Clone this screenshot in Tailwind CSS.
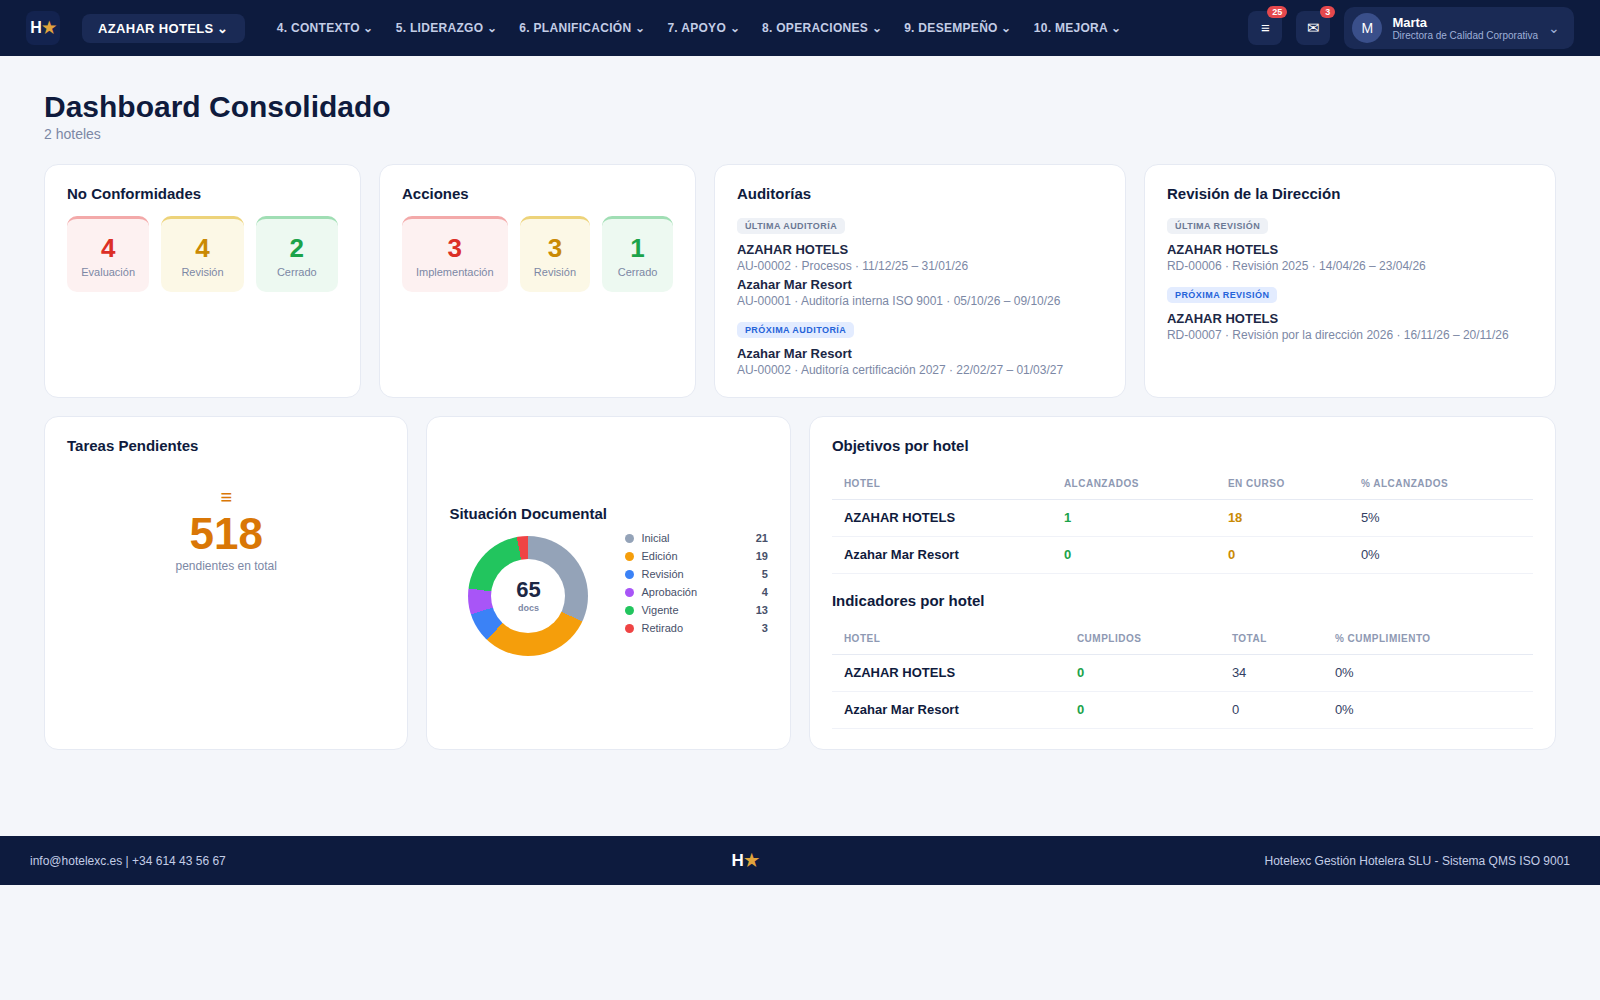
<!DOCTYPE html>
<html lang="es">
<head>
  <meta charset="UTF-8">
  <meta name="viewport" content="width=device-width, initial-scale=1.0">
  <title>Dashboard Consolidado</title>
  <script src="https://cdn.jsdelivr.net/npm/@tailwindcss/browser@4"></script>
</head>
<body class="min-h-screen bg-[#f4f6fa] font-['Liberation_Sans',Arial,sans-serif] text-[#0f1b3d]">
  <!-- Navbar -->
  <header class="flex h-14 items-center bg-[#0d1b3e] px-[26px]">
    <a href="#" aria-label="Inicio" class="flex size-[34px] shrink-0 items-center justify-center rounded-lg bg-[#13234f] text-base leading-[18px] font-bold text-white">H<span class="text-[#e0a43c]">★</span></a>
    <button type="button" class="ml-[22px] shrink-0 rounded-lg bg-[#1a2a55] px-4 py-[7px] text-[13px] leading-[15px] font-bold tracking-wide whitespace-nowrap text-white">AZAHAR HOTELS ⌄</button>
    <nav class="ml-8 flex gap-[22px] text-xs leading-[14px] font-bold tracking-wide whitespace-nowrap text-[#c3cde6]">
      <button type="button">4. CONTEXTO ⌄</button>
      <button type="button">5. LIDERAZGO ⌄</button>
      <button type="button">6. PLANIFICACIÓN ⌄</button>
      <button type="button">7. APOYO ⌄</button>
      <button type="button">8. OPERACIONES ⌄</button>
      <button type="button">9. DESEMPEÑO ⌄</button>
      <button type="button">10. MEJORA ⌄</button>
    </nav>
    <div class="ml-auto flex shrink-0 items-center gap-[14px]">
      <button type="button" aria-label="Tareas" class="relative size-[34px] rounded-lg bg-[#1a2a55] text-[15px] text-white">≡<span class="absolute -top-[5px] -right-[5px] rounded-full bg-[#e5484d] px-[5px] py-px text-[9px] leading-[10px] font-bold">25</span></button>
      <button type="button" aria-label="Mensajes" class="relative size-[34px] rounded-lg bg-[#1a2a55] text-[15px] text-white">✉<span class="absolute -top-[5px] -right-[5px] rounded-full bg-[#e5484d] px-[5px] py-px text-[9px] leading-[10px] font-bold">3</span></button>
      <button type="button" class="flex h-[42px] items-center gap-[10px] rounded-[10px] bg-[#1a2a55] pr-[14px] pl-2 text-left">
        <span class="flex size-[30px] items-center justify-center rounded-full bg-[#3a4f8a] text-sm text-white">M</span>
        <span>
          <span class="block text-[13px] leading-[15px] font-bold text-white">Marta</span>
          <span class="block text-[10px] leading-[11px] text-[#9fb0d8]">Directora de Calidad Corporativa</span>
        </span>
        <span class="text-sm text-[#9fb0d8]">⌄</span>
      </button>
    </div>
  </header>

  <main class="px-11 pt-[34px] pb-[86px]">
    <h1 class="text-3xl leading-[34px] font-bold">Dashboard Consolidado</h1>
    <p class="mt-0.5 text-sm leading-4 text-[#7c88a5]">2 hoteles</p>

    <!-- Fila superior -->
    <div class="mt-[22px] grid grid-cols-[1fr_1fr_1.3fr_1.3fr] gap-[18px]">
      <section class="rounded-[14px] border border-[#e6eaf3] bg-white px-[22px] pt-5 pb-[19px]">
        <h2 class="mb-[14px] text-[15px] leading-[17px] font-bold">No Conformidades</h2>
        <div class="flex gap-3 text-center text-[11px] leading-[13px] text-[#7c88a5]">
          <div class="flex-1 rounded-[10px] border-t-[3px] border-[#f3a9a9] bg-[#fdf1f1] px-[14px] pt-[15px] pb-[13px]"><div class="mb-[3px] text-[26px] leading-[29px] font-bold text-[#dc2f26]">4</div>Evaluación</div>
          <div class="flex-1 rounded-[10px] border-t-[3px] border-[#edd37a] bg-[#fcf8e6] px-[14px] pt-[15px] pb-[13px]"><div class="mb-[3px] text-[26px] leading-[29px] font-bold text-[#ca8a04]">4</div>Revisión</div>
          <div class="flex-1 rounded-[10px] border-t-[3px] border-[#a0deb4] bg-[#edf9f1] px-[14px] pt-[15px] pb-[13px]"><div class="mb-[3px] text-[26px] leading-[29px] font-bold text-[#1ba34a]">2</div>Cerrado</div>
        </div>
      </section>

      <section class="rounded-[14px] border border-[#e6eaf3] bg-white px-[22px] pt-5 pb-[19px]">
        <h2 class="mb-[14px] text-[15px] leading-[17px] font-bold">Acciones</h2>
        <div class="flex gap-3 text-center text-[11px] leading-[13px] text-[#7c88a5]">
          <div class="flex-1 rounded-[10px] border-t-[3px] border-[#f3a9a9] bg-[#fdf1f1] px-[14px] pt-[15px] pb-[13px]"><div class="mb-[3px] text-[26px] leading-[29px] font-bold text-[#dc2f26]">3</div>Implementación</div>
          <div class="flex-1 rounded-[10px] border-t-[3px] border-[#edd37a] bg-[#fcf8e6] px-[14px] pt-[15px] pb-[13px]"><div class="mb-[3px] text-[26px] leading-[29px] font-bold text-[#ca8a04]">3</div>Revisión</div>
          <div class="flex-1 rounded-[10px] border-t-[3px] border-[#a0deb4] bg-[#edf9f1] px-[14px] pt-[15px] pb-[13px]"><div class="mb-[3px] text-[26px] leading-[29px] font-bold text-[#1ba34a]">1</div>Cerrado</div>
        </div>
      </section>

      <section class="rounded-[14px] border border-[#e6eaf3] bg-white px-[22px] pt-5 pb-[19px]">
        <h2 class="mb-4 text-[15px] leading-[17px] font-bold">Auditorías</h2>
        <div class="flex flex-col items-start gap-[3px]">
          <span class="mb-[5px] rounded-[5px] bg-[#eef1f6] px-2 py-[3px] text-[9px] leading-[10px] font-bold tracking-wider text-[#6b7894]">ÚLTIMA AUDITORÍA</span>
          <div class="leading-4">
            <p class="text-[13px] leading-4 font-bold text-[#1c2745]">AZAHAR HOTELS</p>
            <p class="text-xs leading-4 text-[#7c88a5]">AU-00002 · Procesos · 11/12/25 – 31/01/26</p>
          </div>
          <div>
            <p class="text-[13px] leading-4 font-bold text-[#1c2745]">Azahar Mar Resort</p>
            <p class="text-xs leading-4 text-[#7c88a5]">AU-00001 · Auditoría interna ISO 9001 · 05/10/26 – 09/10/26</p>
          </div>
        </div>
        <div class="mt-[13px] flex flex-col items-start gap-[3px]">
          <span class="mb-[5px] rounded-[5px] bg-[#e3ecff] px-2 py-[3px] text-[9px] leading-[10px] font-bold tracking-wider text-[#2563d9]">PRÓXIMA AUDITORÍA</span>
          <div>
            <p class="text-[13px] leading-4 font-bold text-[#1c2745]">Azahar Mar Resort</p>
            <p class="text-xs leading-4 text-[#7c88a5]">AU-00002 · Auditoría certificación 2027 · 22/02/27 – 01/03/27</p>
          </div>
        </div>
      </section>

      <section class="rounded-[14px] border border-[#e6eaf3] bg-white px-[22px] pt-5 pb-[19px]">
        <h2 class="mb-4 text-[15px] leading-[17px] font-bold">Revisión de la Dirección</h2>
        <div class="flex flex-col items-start gap-[3px]">
          <span class="mb-[5px] rounded-[5px] bg-[#eef1f6] px-2 py-[3px] text-[9px] leading-[10px] font-bold tracking-wider text-[#6b7894]">ÚLTIMA REVISIÓN</span>
          <div>
            <p class="text-[13px] leading-4 font-bold text-[#1c2745]">AZAHAR HOTELS</p>
            <p class="text-xs leading-4 text-[#7c88a5]">RD-00006 · Revisión 2025 · 14/04/26 – 23/04/26</p>
          </div>
        </div>
        <div class="mt-[13px] flex flex-col items-start gap-[3px]">
          <span class="mb-[5px] rounded-[5px] bg-[#e3ecff] px-2 py-[3px] text-[9px] leading-[10px] font-bold tracking-wider text-[#2563d9]">PRÓXIMA REVISIÓN</span>
          <div>
            <p class="text-[13px] leading-4 font-bold text-[#1c2745]">AZAHAR HOTELS</p>
            <p class="text-xs leading-4 text-[#7c88a5]">RD-00007 · Revisión por la dirección 2026 · 16/11/26 – 20/11/26</p>
          </div>
        </div>
      </section>
    </div>

    <!-- Fila inferior -->
    <div class="mt-[18px] grid grid-cols-[1fr_1fr_2.05fr] gap-[18px]">
      <section class="rounded-[14px] border border-[#e6eaf3] bg-white px-[22px] py-5">
        <h2 class="mb-8 text-[15px] leading-[17px] font-bold">Tareas Pendientes</h2>
        <div class="text-center text-[#d97706]">
          <div class="text-xl leading-[23px]">≡</div>
          <div class="text-[44px] leading-[50px] font-bold">518</div>
          <div class="text-xs leading-[14px] text-[#7c88a5]">pendientes en total</div>
        </div>
      </section>

      <section class="flex flex-col justify-center rounded-[14px] border border-[#e6eaf3] bg-white px-[22px] py-5">
        <h2 class="mb-[9px] text-[15px] leading-[17px] font-bold">Situación Documental</h2>
        <div class="flex items-start gap-[18px]">
          <div class="flex h-[130px] w-[158px] shrink-0 items-center justify-center">
            <div class="flex size-[120px] items-center justify-center rounded-full bg-[conic-gradient(#94a3b8_0_32%,#f59e0b_32%_62%,#3b82f6_62%_70%,#a855f7_70%_77%,#22c55e_77%_97%,#ef4444_97%)]">
              <div class="flex size-[74px] flex-col items-center justify-center rounded-full bg-white">
                <span class="text-[22px] leading-[24px] font-bold text-[#1c2745]">65</span>
                <span class="text-[9px] leading-[12px] font-bold text-[#7c88a5]">docs</span>
              </div>
            </div>
          </div>
          <ul class="flex grow flex-col gap-1 text-[11px] leading-[14px] text-[#475069]">
            <li class="flex items-center"><span class="mr-[7px] size-[9px] rounded-full bg-[#94a3b8]"></span>Inicial<b class="ml-auto">21</b></li>
            <li class="flex items-center"><span class="mr-[7px] size-[9px] rounded-full bg-[#f59e0b]"></span>Edición<b class="ml-auto">19</b></li>
            <li class="flex items-center"><span class="mr-[7px] size-[9px] rounded-full bg-[#3b82f6]"></span>Revisión<b class="ml-auto">5</b></li>
            <li class="flex items-center"><span class="mr-[7px] size-[9px] rounded-full bg-[#a855f7]"></span>Aprobación<b class="ml-auto">4</b></li>
            <li class="flex items-center"><span class="mr-[7px] size-[9px] rounded-full bg-[#22c55e]"></span>Vigente<b class="ml-auto">13</b></li>
            <li class="flex items-center"><span class="mr-[7px] size-[9px] rounded-full bg-[#ef4444]"></span>Retirado<b class="ml-auto">3</b></li>
          </ul>
        </div>
      </section>

      <section class="rounded-[14px] border border-[#e6eaf3] bg-white px-[22px] py-5">
        <h2 class="mb-[14px] text-[15px] leading-[17px] font-bold">Objetivos por hotel</h2>
        <table class="w-full text-left text-[13px] leading-[14px] text-[#334063]">
          <thead>
            <tr class="border-b border-[#e6eaf3] text-[10px] leading-[11px] tracking-wider text-[#8e99b3]">
              <th class="w-[220px] px-3 py-[10px]">HOTEL</th>
              <th class="w-[164px] px-3 py-[10px]">ALCANZADOS</th>
              <th class="w-[133px] px-3 py-[10px]">EN CURSO</th>
              <th class="px-3 py-[10px]">% ALCANZADOS</th>
            </tr>
          </thead>
          <tbody>
            <tr class="border-b border-[#f0f2f8]">
              <td class="px-3 py-[11px] font-bold text-[#0f1b3d]">AZAHAR HOTELS</td>
              <td class="px-3 py-[11px] font-bold text-[#1ba34a]">1</td>
              <td class="px-3 py-[11px] font-bold text-[#ca8a04]">18</td>
              <td class="px-3 py-[11px]">5%</td>
            </tr>
            <tr class="border-b border-[#f0f2f8]">
              <td class="px-3 py-[11px] font-bold text-[#0f1b3d]">Azahar Mar Resort</td>
              <td class="px-3 py-[11px] font-bold text-[#1ba34a]">0</td>
              <td class="px-3 py-[11px] font-bold text-[#ca8a04]">0</td>
              <td class="px-3 py-[11px]">0%</td>
            </tr>
          </tbody>
        </table>

        <h2 class="mt-[18px] mb-[14px] text-[15px] leading-[17px] font-bold">Indicadores por hotel</h2>
        <table class="w-full text-left text-[13px] leading-[14px] text-[#334063]">
          <thead>
            <tr class="border-b border-[#e6eaf3] text-[10px] leading-[11px] tracking-wider text-[#8e99b3]">
              <th class="w-[233px] px-3 py-[10px]">HOTEL</th>
              <th class="w-[155px] px-3 py-[10px]">CUMPLIDOS</th>
              <th class="w-[103px] px-3 py-[10px]">TOTAL</th>
              <th class="px-3 py-[10px]">% CUMPLIMIENTO</th>
            </tr>
          </thead>
          <tbody>
            <tr class="border-b border-[#f0f2f8]">
              <td class="px-3 py-[11px] font-bold text-[#0f1b3d]">AZAHAR HOTELS</td>
              <td class="px-3 py-[11px] font-bold text-[#1ba34a]">0</td>
              <td class="px-3 py-[11px]">34</td>
              <td class="px-3 py-[11px]">0%</td>
            </tr>
            <tr class="border-b border-[#f0f2f8]">
              <td class="px-3 py-[11px] font-bold text-[#0f1b3d]">Azahar Mar Resort</td>
              <td class="px-3 py-[11px] font-bold text-[#1ba34a]">0</td>
              <td class="px-3 py-[11px]">0</td>
              <td class="px-3 py-[11px]">0%</td>
            </tr>
          </tbody>
        </table>
      </section>
    </div>
  </main>

  <!-- Footer -->
  <footer class="flex items-center justify-between bg-[#0d1b3e] px-[30px] py-[14px] text-xs text-[#c3cde6]">
    <span>info@hotelexc.es | +34 614 43 56 67</span>
    <span class="text-[17px] leading-[21px] font-bold text-white">H<span class="text-[#e0a43c]">★</span></span>
    <span>Hotelexc Gestión Hotelera SLU - Sistema QMS ISO 9001</span>
  </footer>
</body>
</html>
